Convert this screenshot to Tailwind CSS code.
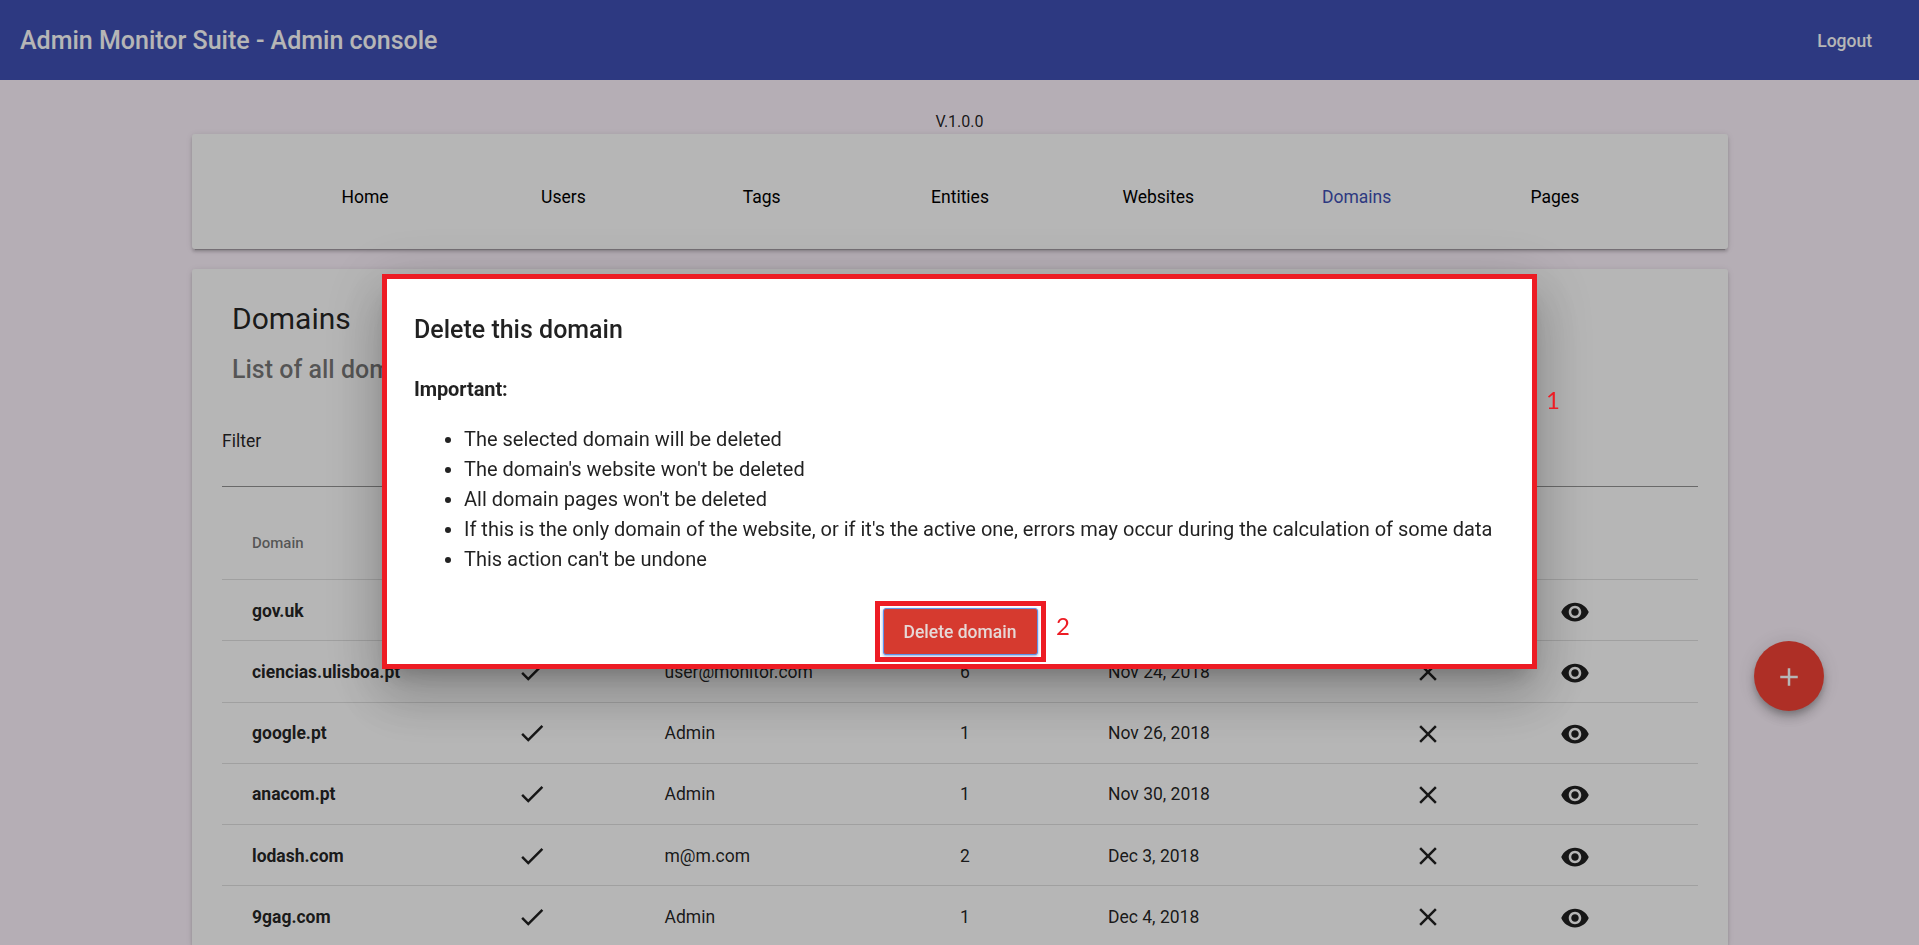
<!DOCTYPE html>
<html lang="en">
<head>
<meta charset="utf-8">
<title>Admin Monitor Suite - Admin console</title>
<script src="https://cdn.jsdelivr.net/npm/@tailwindcss/browser@4"></script>
</head>
<body class="h-[945px] overflow-hidden bg-[#fef4fe] font-['Roboto',sans-serif] text-[17.5px] text-black/87">
<svg class="hidden">
  <symbol id="check" viewBox="0 0 24 24"><path d="M9 16.2L4.8 12l-1.4 1.4L9 19 21 7l-1.4-1.4L9 16.2z"/></symbol>
  <symbol id="clear" viewBox="0 0 24 24"><path d="M19 6.41L17.59 5 12 10.59 6.41 5 5 6.41 10.59 12 5 17.59 6.41 19 12 13.41 17.59 19 19 17.59 13.41 12z"/></symbol>
  <symbol id="eye" viewBox="0 0 24 24"><path d="M12 4.5C7 4.5 2.73 7.61 1 12c1.73 4.39 6 7.5 11 7.5s9.27-3.11 11-7.5c-1.73-4.39-6-7.5-11-7.5zM12 17c-2.76 0-5-2.24-5-5s2.24-5 5-5 5 2.24 5 5-2.24 5-5 5zm0-8c-1.66 0-3 1.34-3 3s1.34 3 3 3 3-1.34 3-3-1.34-3-3-3z"/></symbol>
</svg>

<header class="flex h-20 items-center justify-between bg-[#3f51b5] pr-[47px] pl-5 font-medium text-white">
  <h1 class="pt-0.5 text-[25px]">Admin Monitor Suite - Admin console</h1>
  <a class="pt-0.5">Logout</a>
</header>

<main class="flex h-[865px] flex-col items-center overflow-hidden">
  <p class="flex h-[54px] shrink-0 items-end justify-center pb-0.5 text-[16px] leading-5">V.1.0.0</p>

  <nav class="flex h-[115px] w-[1536px] shrink-0 items-center justify-center rounded-[3px] bg-white pt-3 pl-px text-black shadow-[0_4px_1px_-3px_rgba(0,0,0,.2),0_3px_3px_0_rgba(0,0,0,.14),0_1px_6px_0_rgba(0,0,0,.12)]">
    <a class="w-[198.3px] text-center">Home</a>
    <a class="w-[198.3px] text-center">Users</a>
    <a class="w-[198.3px] text-center">Tags</a>
    <a class="w-[198.3px] text-center">Entities</a>
    <a class="w-[198.3px] text-center">Websites</a>
    <a class="w-[198.3px] text-center text-[#3f51b5]">Domains</a>
    <a class="w-[198.3px] text-center">Pages</a>
  </nav>

  <section class="mt-5 min-h-0 w-[1536px] flex-1 rounded-t-[3px] bg-white px-[30px] pt-[30px] shadow-[0_4px_1px_-3px_rgba(0,0,0,.2),0_3px_3px_0_rgba(0,0,0,.14),0_1px_6px_0_rgba(0,0,0,.12)]">
    <h2 class="pl-[10.5px] text-[30px] leading-10">Domains</h2>
    <p class="mt-[11px] pl-[10.5px] text-[25px] leading-10 font-medium text-black/54">List of all domains</p>
    <div class="mt-[31px] h-[66px] border-b border-black/42 pt-[10px] pl-[0.5px] leading-5">Filter</div>

    <div class="flex h-[93px] items-center border-b border-black/12 pt-[21px] pl-[30.5px] text-[15px] font-medium text-black/54">Domain</div>
    <div id="rows"></div>
  </section>
</main>

<template id="row">
  <div class="grid h-[61.25px] grid-cols-[295px_148px_223px_155px_311px_148px_147px] items-center border-b border-black/12 pt-px">
    <span class="pl-[30.5px] font-bold"></span>
    <svg class="size-[30px] fill-black/87"><use href="#check"/></svg>
    <span></span>
    <span class="text-center"></span>
    <span class="pl-[65.5px]"></span>
    <svg class="mt-px size-[30px] justify-self-center fill-black/87"><use href="#clear"/></svg>
    <svg class="mt-0.5 size-[30px] justify-self-center fill-black/87"><use href="#eye"/></svg>
  </div>
</template>
<script>
  const data = [
    ['gov.uk', 'Admin', '1', 'Nov 24, 2018'],
    ['ciencias.ulisboa.pt', 'user@monitor.com', '6', 'Nov 24, 2018'],
    ['google.pt', 'Admin', '1', 'Nov 26, 2018'],
    ['anacom.pt', 'Admin', '1', 'Nov 30, 2018'],
    ['lodash.com', 'm@m.com', '2', 'Dec 3, 2018'],
    ['9gag.com', 'Admin', '1', 'Dec 4, 2018'],
  ];
  for (const r of data) {
    const n = document.getElementById('row').content.cloneNode(true);
    n.querySelectorAll('span').forEach((s, i) => s.textContent = r[i]);
    document.getElementById('rows').append(n);
  }
</script>

<button class="fixed top-[641px] left-[1754px] flex size-[70px] items-center justify-center rounded-full bg-[#f44336] pt-0.5 shadow-[0_4px_6px_-1px_rgba(0,0,0,.2),0_8px_12px_0_rgba(0,0,0,.14),0_1px_22px_0_rgba(0,0,0,.12)]">
  <svg viewBox="0 0 24 24" class="size-[30px] fill-white"><path d="M19 13h-6v6h-2v-6H5v-2h6V5h2v6h6v2z"/></svg>
</button>

<div class="fixed inset-0 bg-black/[0.288]"></div>

<div class="fixed top-[274px] left-[382px] h-[395px] w-[1155px] border-5 border-[#ed1c24] bg-white px-[27px] pt-[31px] shadow-[0_14px_19px_-9px_rgba(0,0,0,.2),0_30px_48px_4px_rgba(0,0,0,.14),0_11px_58px_10px_rgba(0,0,0,.12)]">
  <h2 class="text-[25px] leading-10 font-medium">Delete this domain</h2>
  <p class="mt-[19px] text-xl leading-[40px] font-bold tracking-[-0.1px]">Important:</p>
  <ul class="mt-[15px] list-disc pl-[50px] text-xl leading-[30px]">
    <li>The selected domain will be deleted</li>
    <li>The domain's website won't be deleted</li>
    <li>All domain pages won't be deleted</li>
    <li class="whitespace-nowrap">If this is the only domain of the website, or if it's the active one, errors may occur during the calculation of some data</li>
    <li>This action can't be undone</li>
  </ul>
</div>

<div class="fixed top-[601px] left-[875px] flex h-[61px] w-[171px] items-center justify-center border-5 border-[#ed1c24]">
  <button class="mr-px h-[47px] w-[155px] rounded-[3px] border border-[#5f92ea] bg-[#d63a2f] pt-px font-medium text-[#e6d8d6] shadow-[0_1px_3px_0_rgba(70,110,190,.6)]">Delete domain</button>
</div>
<span class="fixed top-[385px] left-[1546px] font-['Lato',sans-serif] text-[24px] leading-[30px] text-[#ed1c24]">1</span>
<span class="fixed top-[611px] left-[1056px] font-['Lato',sans-serif] text-[24px] leading-[30px] text-[#ed1c24]">2</span>
</body>
</html>
